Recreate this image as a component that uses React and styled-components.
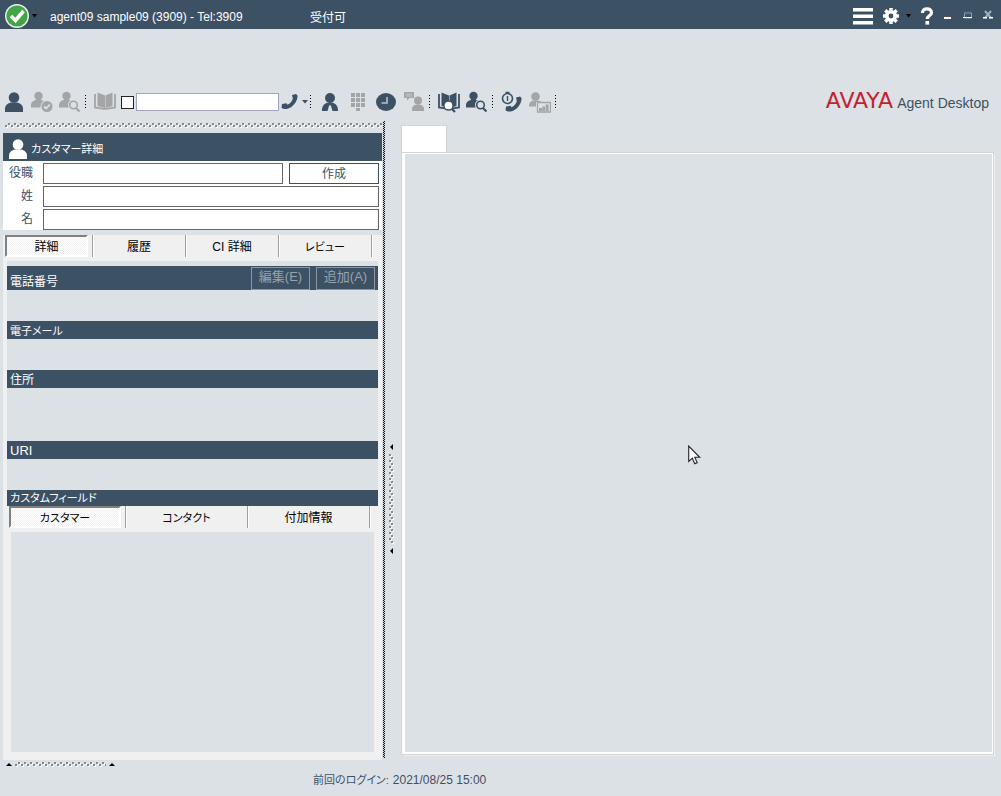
import React from "react";
import styled, { createGlobalStyle, css } from "styled-components";

const c = {
  navy: "#3d5165",
  bg: "#dce1e5",
  face: "#f0f0f0",
  grey: "#a3a5a7",
  red: "#c41f32",
};

const GlobalStyle = createGlobalStyle`
  * { box-sizing: border-box; }
  body {
    margin: 0;
    background: ${c.bg};
    color: ${c.navy};
    font: 12px/16px "Liberation Sans", "Noto Sans CJK JP", sans-serif;
    font-feature-settings: "palt";
  }
  button, input { font: inherit; font-feature-settings: inherit; color: inherit; margin: 0; padding: 0; border-radius: 0; }
`;

const Page = styled.div`
  min-height: 100vh;
  display: flex;
  flex-direction: column;
`;

const TitleBar = styled.header`
  height: 29px;
  background: ${c.navy};
  color: #fff;
  display: flex;
  align-items: center;
  padding: 2px 8px 0 4px;
`;

const BarButton = styled.button`
  display: flex;
  align-items: center;
  justify-content: center;
  width: ${(p) => p.$w}px;
  height: 26px;
  border: 0;
  background: none;
`;

const AgentName = styled.span`
  width: 260px;
  margin-left: 12px;
  padding-top: 2px;
`;

const AgentState = styled.span`
  flex: 1;
  padding-top: 4px;
`;

const Toolbar = styled.div`
  height: 92px;
  padding: 59px 12px 5px 0;
  display: flex;
  align-items: center;
`;

const ToolButton = styled.button`
  width: ${(p) => p.$w || 28}px;
  height: 28px;
  display: flex;
  align-items: center;
  justify-content: center;
  border: 0;
  background: none;
  color: ${(p) => (p.$off ? c.grey : c.navy)};
`;

const Divider = styled.span`
  width: 1px;
  height: 14px;
  margin: 0 5px 0 1px;
  background: repeating-linear-gradient(#000 0 1px, transparent 1px 3px);
`;

const Check = styled.input`
  appearance: none;
  width: 13px;
  height: 13px;
  margin: 0 2px;
  border: 1px solid #222;
  background: #fff;
`;

const DialInput = styled.input`
  width: 143px;
  height: 18px;
  border: 1px solid #a3a3c2;
  background: #fff;
`;

const Brand = styled.div`
  margin-left: auto;
  display: flex;
  align-items: baseline;
  gap: 4px;
  padding-top: 2px;
  font-size: 14px;
  line-height: 24px;
`;

const Wordmark = styled.strong`
  font: 500 22px/20px "DejaVu Sans", sans-serif;
  color: ${c.red};
`;

const Body = styled.main`
  flex: 1;
  display: flex;
`;

const Side = styled.section`
  width: 382px;
  padding: 2px 0 0 3px;
  display: flex;
  flex-direction: column;
`;

const dot = (color) => `conic-gradient(at 2px 2px, transparent 270deg, ${color} 0)`;

const Grip = styled.div`
  background-image: ${dot("#858789")}, ${dot("#858789")}, ${dot("#fff")}, ${dot("#fff")};
  ${(p) =>
    p.$vertical
      ? css`
          width: 5px;
          height: 90px;
          background-size: 5px 6px;
          background-repeat: repeat-y;
          background-position: 0 0, 2px 3px, 1px 1px, 3px 4px;
        `
      : css`
          width: ${p.$w ? p.$w + "px" : "auto"};
          height: 5px;
          background-size: 6px 5px;
          background-repeat: repeat-x;
          background-position: 3px 0, 0 2px, 4px 1px, 1px 3px;
        `}
`;

const SideGrip = styled(Grip)`
  margin: 0 0 5px 2px;
`;

const Panel = styled.div`
  flex: 1;
  display: flex;
  flex-direction: column;
`;

const PanelTitle = styled.h2`
  height: 28px;
  margin: 0;
  padding: 3px 6px 0;
  display: flex;
  align-items: center;
  gap: 4px;
  background: ${c.navy};
  color: #fff;
  font: inherit;
  font-size: 11px;
`;

const Form = styled.form`
  display: grid;
  gap: 2px;
  padding: 2px 3px 0 0;
  background: #fff;
`;

const FormRow = styled.div`
  display: flex;
  height: 21px;
`;

const Label = styled.label`
  width: 30px;
  margin-right: 10px;
  text-align: right;
  line-height: 21px;
`;

const Field = styled.input`
  flex: 1;
  min-width: 0;
  border: 1px solid #666;
  background: #fff;
`;

const CreateButton = styled.button`
  width: 90px;
  margin-left: 6px;
  border: 1px solid ${c.navy};
  background: #fff;
`;

const Tabs = styled.div`
  display: grid;
  grid-template-columns: ${(p) => p.$cols};
  height: 26px;
  padding-right: ${(p) => p.$end}px;
  background: ${c.face};
  margin-top: ${(p) => p.$gap || 0}px;
`;

const TabCell = styled.div`
  display: flex;
  height: 22px;
  border-right: 1px solid #a0a0a0;
  box-shadow: 1px 0 #fff;
`;

const Tab = styled.button`
  flex: 1;
  padding-top: 2px;
  color: #000;
  border: 0;
  background: none;
  font-size: ${(p) => (p.$kana ? 11 : 12)}px;
  ${(p) =>
    p.$on &&
    css`
      margin: 0 4px 0 2px;
      border: 2px solid #fff;
      border-top-color: #808080;
      border-left-color: #808080;
      background: repeating-conic-gradient(#fff 0 25%, #f0f0f0 0 50%) 0 0 / 2px 2px;
    `}
`;

const Details = styled.div`
  flex: 1;
  display: flex;
  flex-direction: column;
  border: solid ${c.face};
  border-width: 0 4px;
  padding-top: 5px;
`;

const Section = styled.section`
  padding-bottom: ${(p) => p.$space}px;
`;

const SectionTitle = styled.div`
  display: flex;
  align-items: flex-end;
  justify-content: space-between;
  height: ${(p) => p.$h || 18}px;
  padding: 0 3px;
  background: ${c.navy};
  color: #fff;
  h3 {
    margin: 0;
    font: inherit;
    font-size: ${(p) => p.$font || 12}px;
  }
`;

const Actions = styled.div`
  display: flex;
  gap: 6px;
`;

const GhostButton = styled.button`
  height: 23px;
  width: 59px;
  padding-bottom: 4px;
  border: 1px solid #8b96a1;
  background: none;
  color: #98a2ac;
  font-size: 13px;
`;

const Custom = styled.div`
  flex: 1;
  border: solid ${c.face};
  border-width: 0 4px 8px;
`;

const Splitter = styled.div`
  width: 19px;
  display: flex;
  padding-bottom: 2px;
  &::before {
    content: "";
    width: 2px;
    margin-left: 1px;
    background: repeating-conic-gradient(#111 0 25%, #c8cdd1 0 50%) 0 0 / 2px 2px;
  }
`;

const SplitHandle = styled.div`
  flex: 1;
  padding: 118px 0 0 4px;
  display: flex;
  flex-direction: column;
  justify-content: center;
  gap: 4px;
`;

const Work = styled.section`
  flex: 1;
  display: flex;
  flex-direction: column;
  padding: 4px 6px 5px 0;
`;

const WorkTab = styled.button`
  width: 46px;
  height: 28px;
  border: 1px solid #d2d4d6;
  border-bottom: 0;
  background: #fff;
`;

const WorkPane = styled.div`
  flex: 1;
  position: relative;
  border: 1px solid #fff;
  border-left-width: 3px;
  border-bottom-width: 2px;
  margin: 0 2px 1px 1px;
  box-shadow: 0 0 0 1px #d2d4d6, 2px 2px 0 0 #f0f0f0;
`;

const Pointer = styled.svg`
  position: absolute;
  left: 283px;
  top: 291px;
`;

const Footer = styled.footer`
  height: 36px;
  display: flex;
  align-items: flex-start;
  padding: 2px 0 0 6px;
`;

const FootHandle = styled.div`
  width: 307px;
  display: flex;
  gap: 3px;
`;

const LastLogin = styled.p`
  margin: 0;
  padding-top: 10px;
  display: flex;
  gap: 4px;
`;

const LoginLabel = styled.span`
  font-size: 11px;
`;

const Svg = ({ w = 22, h = 22, children }) => (
  <svg width={w} height={h} viewBox={`0 0 ${w} ${h}`} fill="currentColor" aria-hidden="true">
    {children}
  </svg>
);

const Caret = ({ color = "#000", w = 6 }) => (
  <Svg w={w} h={4}><path d={`M0 0h${w}L${w / 2} 3.5z`} fill={color} /></Svg>
);

const Person = () => (
  <Svg w={18} h={20}>
    <circle cx="9" cy="5.500" r="5.300" />
    <path d="M0 20v-3c0-4 3-6 6-6.500h6c3 .5 6 2.500 6 6.500v3z" />
  </Svg>
);

const SmallPerson = () => (
  <>
    <circle cx="7.500" cy="5" r="4.200" />
    <path d="M0 16.500v-2c0-3.500 2.500-5 5-5.500l.5-1h4l.5 1c2.500.5 4 1.500 4.500 3.500l-4 4z" />
  </>
);

const PersonCheck = () => (
  <Svg>
    <SmallPerson />
    <circle cx="16" cy="15.500" r="6.500" fill={c.bg} />
    <circle cx="16" cy="15.500" r="5.500" />
    <path d="M13.200 15.500l2 2 3.600-4" fill="none" stroke={c.bg} strokeWidth="1.800" />
  </Svg>
);

const PersonSearch = () => (
  <Svg>
    <SmallPerson />
    <circle cx="14.500" cy="14" r="5.500" fill={c.bg} />
    <circle cx="14.500" cy="14" r="3.800" fill={c.bg} stroke="currentColor" strokeWidth="1.600" />
    <path d="M17 17l3.500 3.500" stroke="currentColor" strokeWidth="2.200" />
  </Svg>
);

const Pages = () => (
  <>
    <path d="M3.500 1.500l7.500 3V17l-7.500-2zM18.500 1.500l-7 3V17l7-2z" />
    <path d="M1 3v13.500l9 1.300h2l9-1.300V3" fill="none" stroke="currentColor" strokeWidth="1.800" />
  </>
);

const Book = () => <Svg><Pages /></Svg>;

const BookSearch = () => (
  <Svg>
    <Pages />
    <circle cx="10.500" cy="14.500" r="4.500" fill="#fff" stroke="currentColor" strokeWidth="1.300" />
    <path d="M14 18l3 3" stroke="currentColor" strokeWidth="2.200" />
  </Svg>
);

const Handset = ({ x = 0, y = 0 }) => (
  <path
    transform={`translate(${x} ${y})`}
    d="M11 1l4-1 1.500 1.500c.5 5-4.500 12.500-11 13.500-2 .3-4-.3-5-1.300L1 10l4.500-.7 1 1.400C9 9.800 11.300 7 11.800 4.500z"
  />
);

const Phone = () => <Svg w={18} h={18}><Handset y={1} /></Svg>;

const Agent = () => (
  <Svg w={18} h={20}>
    <circle cx="9" cy="6" r="5" />
    <path d="M1 19c-.3-4 1.500-7.500 6-8.500h4c4.500 1 6.300 4.500 6 8.500h-5.500l-1.500-5-1-1.200-1 1.200-1.500 5z" />
  </Svg>
);

const Keypad = () => (
  <Svg w={16} h={20}>
    {[1, 6, 11].map((y) => [1, 6, 11].map((x) => <rect key={`${x}-${y}`} x={x} y={y} width="4" height="4" />))}
    <rect x="6" y="16" width="4" height="3" />
  </Svg>
);

const Clock = () => (
  <Svg w={20} h={20}>
    <ellipse cx="10" cy="10" rx="10" ry="9" />
    <path d="M11 5v6H5.500" fill="none" stroke="#b7c2cc" strokeWidth="1.600" />
  </Svg>
);

const Consult = () => (
  <Svg>
    <path d="M1 1h10v6H6.500L4 9.500V7H1z" />
    <path d="M3 3.200h6M3 5h6" stroke={c.bg} strokeWidth=".6" />
    <circle cx="15" cy="9.500" r="4" />
    <path d="M9 20v-2c0-2.500 2-4 4.500-4.500h3c2.500.5 4.500 2 4.500 4.500v2z" />
  </Svg>
);

const Callback = () => (
  <Svg>
    <circle cx="6.500" cy="7.500" r="5" fill="none" stroke="currentColor" strokeWidth="1.600" />
    <path d="M6.500 5v5M4.500 1.500h4" stroke="currentColor" strokeWidth="1.400" />
    <Handset x={4} y={5.5} />
  </Svg>
);

const Report = () => (
  <Svg>
    <circle cx="6.500" cy="5.500" r="4.300" />
    <path d="M0 15.500c0-4 2-5.500 4.500-6h4c2 .4 3 1 3.500 1.500H7v4.500z" />
    <path d="M8.500 11.500h13v9.500h-13z" fill="none" stroke="currentColor" strokeWidth="1.300" />
    <path d="M10 17h3v3h-3zM13.300 15.500h2.700v4.500h-2.700zM16.600 13.500h3V20h-3z" />
  </Svg>
);

const Ready = () => (
  <Svg w={26} h={24}>
    <circle cx="13" cy="12" r="12" fill="#eef4ee" />
    <circle cx="13" cy="12" r="10.600" fill="#43a547" />
    <path d="M7 12l4.500 4.500L19.500 7" fill="none" stroke="#fff" strokeWidth="3.600" />
  </Svg>
);

const Gear = () => (
  <Svg w={18} h={18}>
    <path d="M9 1v16M1 9h16M3.300 3.300l11.400 11.400M14.700 3.300L3.300 14.700" stroke="currentColor" strokeWidth="3.400" />
    <circle cx="9" cy="9" r="6" />
    <circle cx="9" cy="9" r="2.400" fill={c.navy} />
  </Svg>
);

const Menu = () => <Svg w={20} h={18}><path d="M0 1h20v3.500H0zM0 7.500h20V11H0zM0 14h20v3.500H0z" /></Svg>;

const Help = () => (
  <Svg w={14} h={18}>
    <path d="M2.500 6C2.500 3 4.500 1.800 7 1.800s4.500 1.400 4.500 3.900C11.500 8.500 7.300 8.700 7.300 12" fill="none" stroke="currentColor" strokeWidth="3.200" />
    <rect x="5.500" y="14" width="3.600" height="3.600" />
  </Svg>
);

const ArrowUp = () => <Svg w={6} h={5}><path d="M0 4L3 1l3 3z" fill="#000" /></Svg>;
const ArrowLeft = () => <Svg w={5} h={6}><path d="M4 0L1 3l3 3z" fill="#000" /></Svg>;

export default function App() {
  return (
    <Page>
      <GlobalStyle />
      <TitleBar>
        <BarButton $w={26} aria-label="受付可"><Ready /></BarButton>
        <BarButton $w={8} aria-label="状態"><Caret w={5} /></BarButton>
        <AgentName>agent09 sample09 (3909) - Tel:3909</AgentName>
        <AgentState>受付可</AgentState>
        <BarButton $w={28} aria-label="メニュー"><Menu /></BarButton>
        <BarButton $w={28} aria-label="設定"><Gear /></BarButton>
        <BarButton $w={6} aria-label="設定を開く"><Caret w={5} /></BarButton>
        <BarButton $w={32} aria-label="ヘルプ"><Help /></BarButton>
        <BarButton $w={10} aria-label="最小化">
          <Svg w={8} h={8}><path d="M0 4h7v1H0z" fill="#555" /><path d="M0 5h7v2H0z" /></Svg>
        </BarButton>
        <BarButton $w={30} aria-label="最大化">
          <Svg w={10} h={12}>
            <path d="M1.500 3h7v5h-7z" fill="none" stroke="#8b9db0" />
            <path d="M0 1h9v1H0z" fill="#555" />
            <path d="M0 7h9v1H0z" />
          </Svg>
        </BarButton>
        <BarButton $w={10} aria-label="閉じる">
          <Svg w={10} h={12}><path d="M2 1l6 7M8 1L2 8" stroke="#9fb0c0" strokeWidth="2" /><path d="M0 7h4v1.500H0zM6 7h4v1.500H6z" /></Svg>
        </BarButton>
      </TitleBar>

      <Toolbar>
        <ToolButton aria-label="顧客"><Person /></ToolButton>
        <ToolButton $off aria-label="確認"><PersonCheck /></ToolButton>
        <ToolButton $off aria-label="顧客検索"><PersonSearch /></ToolButton>
        <Divider />
        <ToolButton $off aria-label="電話帳"><Book /></ToolButton>
        <Check type="checkbox" aria-label="外線" />
        <DialInput aria-label="番号" />
        <ToolButton $w={22} aria-label="発信"><Phone /></ToolButton>
        <ToolButton $w={8} aria-label="発信オプション"><Caret color={c.navy} /></ToolButton>
        <Divider />
        <ToolButton aria-label="エージェント"><Agent /></ToolButton>
        <ToolButton $off aria-label="ダイヤルパッド"><Keypad /></ToolButton>
        <ToolButton aria-label="履歴"><Clock /></ToolButton>
        <ToolButton $off aria-label="相談"><Consult /></ToolButton>
        <Divider />
        <ToolButton aria-label="電話帳検索"><BookSearch /></ToolButton>
        <ToolButton aria-label="連絡先検索"><PersonSearch /></ToolButton>
        <Divider />
        <ToolButton aria-label="コールバック"><Callback /></ToolButton>
        <ToolButton $off aria-label="レポート"><Report /></ToolButton>
        <Divider />
        <Brand><Wordmark>AVAYA</Wordmark><span>Agent Desktop</span></Brand>
      </Toolbar>

      <Body>
        <Side>
          <SideGrip />
          <Panel>
            <PanelTitle><Person />カスタマー詳細</PanelTitle>
            <Form onSubmit={(e) => e.preventDefault()}>
              <FormRow>
                <Label htmlFor="title">役職</Label>
                <Field id="title" />
                <CreateButton type="button">作成</CreateButton>
              </FormRow>
              <FormRow><Label htmlFor="last">姓</Label><Field id="last" /></FormRow>
              <FormRow><Label htmlFor="first">名</Label><Field id="first" /></FormRow>
            </Form>
            <Tabs $cols="90fr 93fr 93fr 93fr" $end={10} $gap={5}>
              {["詳細", "履歴", "CI 詳細", "レビュー"].map((t, i) => (
                <TabCell key={t}><Tab $on={i === 0} $kana={i === 3}>{t}</Tab></TabCell>
              ))}
            </Tabs>
            <Details>
              <Section $space={31}>
                <SectionTitle $h={24}>
                  <h3>電話番号</h3>
                  <Actions>
                    <GhostButton disabled>編集(E)</GhostButton>
                    <GhostButton disabled>追加(A)</GhostButton>
                  </Actions>
                </SectionTitle>
              </Section>
              <Section $space={31}><SectionTitle $font={11}><h3>電子メール</h3></SectionTitle></Section>
              <Section $space={53}><SectionTitle><h3>住所</h3></SectionTitle></Section>
              <Section $space={31}><SectionTitle $font={13}><h3>URI</h3></SectionTitle></Section>
              <SectionTitle $h={16} $font={11}><h3>カスタムフィールド</h3></SectionTitle>
              <Tabs $cols="119fr 122fr 122fr" $end={8}>
                {["カスタマー", "コンタクト", "付加情報"].map((t, i) => (
                  <TabCell key={t}><Tab $on={i === 0} $kana={i < 2}>{t}</Tab></TabCell>
                ))}
              </Tabs>
              <Custom />
            </Details>
          </Panel>
        </Side>

        <Splitter>
          <SplitHandle><ArrowLeft /><Grip $vertical /><ArrowLeft /></SplitHandle>
        </Splitter>

        <Work>
          <WorkTab aria-label="作業" />
          <WorkPane>
            <Pointer width="13" height="20" viewBox="0 0 13 20">
              <path d="M.7 1v15.500l3.600-3.300 2.400 5.500 2.500-1.100-2.400-5.300h4.900z" fill="#fff" stroke="#223" strokeWidth="1.100" />
            </Pointer>
          </WorkPane>
        </Work>
      </Body>

      <Footer>
        <FootHandle><ArrowUp /><Grip $w={91} /><ArrowUp /></FootHandle>
        <LastLogin><LoginLabel>前回のログイン:</LoginLabel><span>2021/08/25 15:00</span></LastLogin>
      </Footer>
    </Page>
  );
}
